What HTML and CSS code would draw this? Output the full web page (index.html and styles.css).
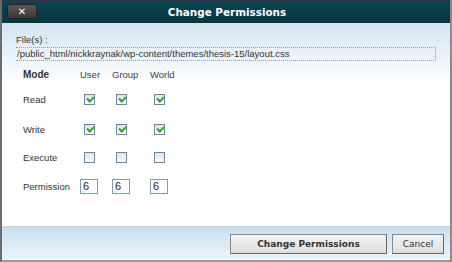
FILE: index.html
```html
<!DOCTYPE html>
<html>
<head>
<meta charset="utf-8">
<link rel="stylesheet" href="styles.css">
</head>
<body>
<div class="dialog">
  <div class="titlebar">
    <button class="close">&#x2715;</button>
    <div class="title">Change Permissions</div>
  </div>
  <div class="body">
    <div class="label">File(s) :</div>
    <div class="path">/public_html/nickkraynak/wp-content/themes/thesis-15/layout.css</div>
    <div class="grid">
      <div class="mode">Mode</div><div class="col">User</div><div class="col">Group</div><div class="col">World</div>
      <div class="rl">Read</div><div class="cell"><span class="cb on"></span></div><div class="cell"><span class="cb on"></span></div><div class="cell"><span class="cb on"></span></div>
      <div class="rl">Write</div><div class="cell"><span class="cb on"></span></div><div class="cell"><span class="cb on"></span></div><div class="cell"><span class="cb on"></span></div>
      <div class="rl">Execute</div><div class="cell"><span class="cb"></span></div><div class="cell"><span class="cb"></span></div><div class="cell"><span class="cb"></span></div>
      <div class="rl">Permission</div><div class="cell num-cell"><span class="num">6</span></div><div class="cell num-cell"><span class="num">6</span></div><div class="cell num-cell"><span class="num">6</span></div>
    </div>
  </div>
  <div class="footer">
    <button class="btn main">Change Permissions</button>
    <button class="btn cancel">Cancel</button>
  </div>
</div>
</body>
</html>
```
FILE: styles.css
```css
html, body { margin: 0; padding: 0; }
body { width: 452px; height: 262px; overflow: hidden; background: #fff; font-family: "Liberation Sans", Arial, sans-serif; }
.dialog { width: 452px; height: 262px; box-sizing: border-box; display: flex; flex-direction: column; border-left: 2px solid #6c6c6c; border-right: 2px solid #8a8a8a; border-bottom: 2px solid #999; }
.titlebar { height: 22px; flex: none; background: linear-gradient(#0d4450, #083540); display: flex; align-items: center; position: relative; border-top: 1px solid #334; }
.close { position: absolute; left: 5px; top: 3px; width: 30px; height: 15px; border-radius: 3px; border: 1px solid #222; background: linear-gradient(#5a5a5a, #3a3636); color: #fff; font-size: 10px; font-weight: bold; padding: 0; line-height: 13px; font-family: "DejaVu Sans", sans-serif; }
.title { flex: 1; text-align: center; color: #fff; font-weight: bold; font-size: 10.4px; font-family: "DejaVu Sans", sans-serif; padding-left: 2px; }
.body { flex: 1; background: linear-gradient(#d3e5f1 0px, #fff 60px); padding: 10px 0 0 14px; font-size: 9.5px; color: #333; }
.label { color: #333; font-size: 9.5px; height: 13px; line-height: 13px; }
.path { margin-top: 1px; width: 420px; height: 14px; box-sizing: border-box; border: 1px dotted #999; border-left: none; line-height: 12px; font-size: 9.5px; color: #333; padding-left: 1px; }
.grid { display: grid; grid-template-columns: 57px 32px 38px 30px; grid-template-rows: 17px 30px 29px 28px 29px; margin-top: 5px; margin-left: 7px; align-items: center; }
.mode { font-weight: bold; font-size: 10px; color: #333; }
.col { color: #444; font-size: 9.5px; }
.rl { color: #333; font-size: 9.5px; padding-top: 3px; }
.cell { display: flex; align-items: center; padding-left: 4px; padding-top: 3px; }
.num-cell { padding-left: 0; }
.cb { width: 11px; height: 11px; box-sizing: border-box; border: 1px solid #6a87a3; background: linear-gradient(#e4e4e4, #fafafa); position: relative; }
.cb.on::after { content: ""; position: absolute; left: 2px; top: 1px; width: 5px; height: 3px; border-left: 2px solid #34a034; border-bottom: 2px solid #34a034; transform: rotate(-45deg); }
.num { width: 18px; height: 15px; box-sizing: border-box; border: 1px solid #7f9db9; background: #fff; font-size: 11px; line-height: 13px; padding-left: 2px; color: #222; }
.footer { height: 33px; flex: none; background: linear-gradient(#c9e0ef, #eef5fa); border-top: 1px solid #ccd; display: flex; justify-content: flex-end; align-items: center; gap: 5px; padding-right: 6px; }
.btn { height: 20px; border: 1px solid #888; border-right-color: #666; border-bottom-color: #666; background: linear-gradient(#f4f4f4, #dedede); font-family: "DejaVu Sans", sans-serif; font-size: 9px; color: #333; padding: 0; }
.main { width: 157px; font-weight: bold; }
.cancel { width: 52px; }
```
